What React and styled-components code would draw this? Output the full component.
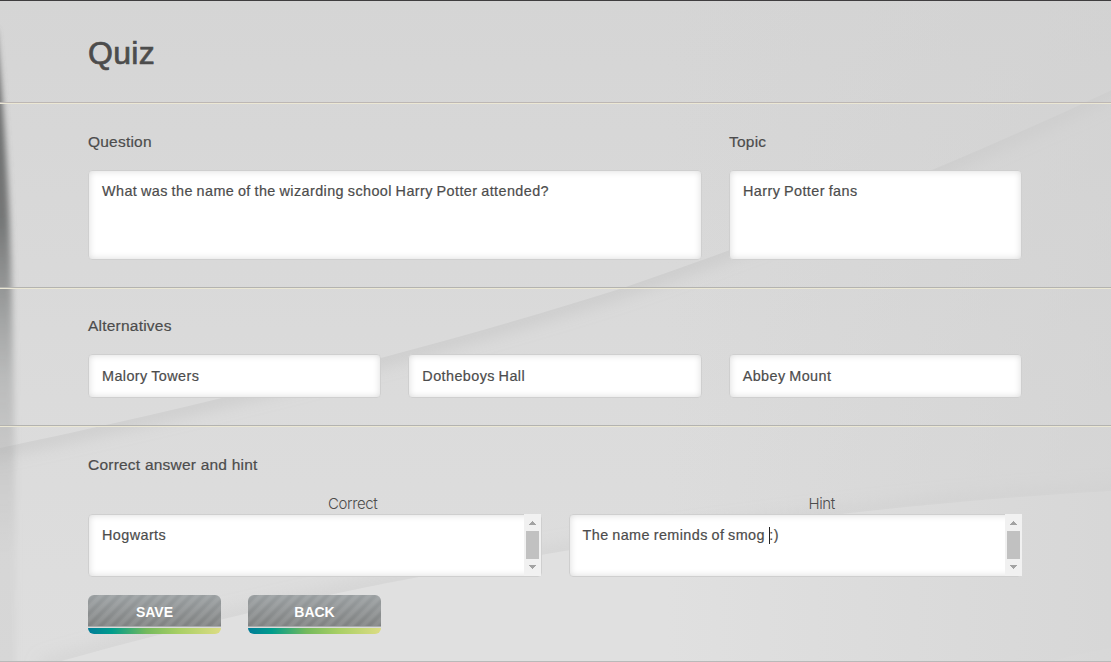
import React from "react";
import styled, { createGlobalStyle } from "styled-components";

const Global = createGlobalStyle`
  * { box-sizing: border-box; }
  body { margin: 0; overflow: hidden; font-family: "Liberation Sans", Arial, sans-serif; color: #4c4c4c; }
`;

const Page = styled.div`
  position: relative;
  height: 662px;
  overflow: hidden;
  border-top: 1px solid #3f3d3f;
  border-bottom: 1px solid #b9b9b9;
  background: #d6d6d6;
`;

const Backdrop = styled.svg`
  position: absolute;
  left: 0;
  top: -1px;
  width: 1111px;
  height: 662px;
`;

const Content = styled.main`
  position: relative;
`;

const Section = styled.section`
  height: ${(p) => p.$height}px;
  padding: ${(p) => p.$top}px 89px 0 88px;
  border-bottom: ${(p) => (p.$last ? "0" : "1px solid #ebe7d4")};
  box-shadow: ${(p) => (p.$last ? "none" : `inset 0 -1px ${p.$rule || "#b3b3b0"}`)};
`;

const Title = styled.h1`
  margin: 0;
  font-size: 32px;
  font-weight: 400;
  line-height: 40px;
  letter-spacing: 0.3px;
  -webkit-text-stroke: 0.7px #4c4c4c;
`;

const Grid = styled.div`
  display: grid;
  grid-template-columns: ${(p) => p.$columns};
  column-gap: 27px;
`;

const Label = styled.h2`
  margin: 0 0 ${(p) => p.$gap || 18}px;
  font-size: 15.5px;
  font-weight: 400;
  line-height: 20px;
  letter-spacing: 0.22px;
  -webkit-text-stroke: 0.2px #4c4c4c;
`;

const Caption = styled.div`
  padding-left: 240px;
  font-family: Inter, "Liberation Sans", sans-serif;
  font-size: 15px;
  font-weight: 300;
  line-height: 20px;
  letter-spacing: -0.4px;
`;

const Field = styled.div`
  display: flex;
  justify-content: space-between;
  height: ${(p) => p.$height}px;
  border: 1px solid #cfcfcf;
  border-radius: 4px;
  background: #fff;
  box-shadow: inset 0 0 7px rgba(0, 0, 0, 0.15);
`;

const FieldText = styled.div`
  padding: ${(p) => p.$top || 10}px 0 0 13px;
  font-size: 14.4px;
  line-height: 20px;
  letter-spacing: 0.42px;
  word-spacing: -0.7px;
  white-space: nowrap;
  -webkit-text-stroke: 0.2px #4c4c4c;
`;

const Caret = styled.span`
  display: inline-block;
  width: 1px;
  height: 17px;
  margin-right: -0.4px;
  vertical-align: -4px;
  background: #222;
`;

const Track = styled.div`
  display: flex;
  flex-direction: column;
  align-items: center;
  justify-content: space-between;
  width: 17px;
  height: 62px;
  margin: -1px -0.5px 0 0;
  padding: 7px 0;
  background: #f1f1f1;
`;

const Thumb = styled.div`
  width: 13px;
  height: 28px;
  background: #c1c1c1;
`;

const Arrow = styled.svg`
  display: block;
  width: 7px;
  height: 4px;
  fill: #a3a3a3;
`;

const Actions = styled.div`
  display: flex;
  gap: 27px;
  margin-top: 18px;
`;

const Button = styled.button`
  width: 133px;
  height: 39px;
  padding: 0 0 6px;
  border: 0;
  border-radius: 6px;
  font: bold 14px/20px "Liberation Sans", Arial, sans-serif;
  letter-spacing: 0;
  color: #fff;
  background:
    linear-gradient(90deg, #007c98 0%, #009c8c 18%, #74b95c 44%, #a8cf64 68%, #dcdc84 100%) 0 33px / 100% 6px no-repeat,
    linear-gradient(#a9abab 0 1px, #dadada 1px 2px) 0 31px / 100% 2px no-repeat,
    repeating-linear-gradient(135deg, rgba(255, 255, 255, 0.1) 0 2px, rgba(255, 255, 255, 0) 4.5px 6px, rgba(255, 255, 255, 0.1) 8.5px),
    linear-gradient(#9a9fa1, #808282 31px);
`;

const UPPER = "M-20 452 C130 422 400 359 623 288 C790 231 960 162 1131 81";
const LOWER = "M40 667 C250 607 420 575 570 550 C750 522 960 498 1131 490";

function Waves() {
  return (
    <Backdrop viewBox="0 0 1111 662">
      <defs>
        <linearGradient id="base" x1="0" y1="0" x2="0" y2="1">
          <stop offset="0" stopColor="#d5d5d5" />
          <stop offset="0.6" stopColor="#dbdbdb" />
          <stop offset="1" stopColor="#dedede" />
        </linearGradient>
        <linearGradient id="side" x1="0" y1="0" x2="1" y2="0">
          <stop offset="0.6" stopColor="#d1d1d1" stopOpacity="0" />
          <stop offset="1" stopColor="#d1d1d1" stopOpacity="0.6" />
        </linearGradient>
        <linearGradient id="edge" x1="0" y1="40" x2="0" y2="560" gradientUnits="userSpaceOnUse">
          <stop offset="0" stopColor="#666" />
          <stop offset="0.35" stopColor="#707272" stopOpacity="0.95" />
          <stop offset="0.5" stopColor="#858787" stopOpacity="0.75" />
          <stop offset="0.65" stopColor="#999b9b" stopOpacity="0.5" />
          <stop offset="0.85" stopColor="#aaa" stopOpacity="0.3" />
          <stop offset="1" stopColor="#bbb" stopOpacity="0.2" />
        </linearGradient>
        <filter id="soft" x="-50%" y="-50%" width="200%" height="200%"><feGaussianBlur stdDeviation="8" /></filter>
        <filter id="fine" filterUnits="userSpaceOnUse" x="-60" y="0" width="160" height="720"><feGaussianBlur stdDeviation="3" /></filter>
        <clipPath id="below"><path d={`${UPPER} V700 H-20 Z`} /></clipPath>
        <clipPath id="above"><path d={`${LOWER} V-20 H-20 V667 Z`} /></clipPath>
      </defs>
      <rect width="1111" height="662" fill="url(#base)" />
      <path d={`${LOWER} V700 H40 Z`} fill="#e0e0e0" />
      <g clipPath="url(#below)">
        <path d={UPPER} fill="none" stroke="#aaa" strokeOpacity="0.28" strokeWidth="17" filter="url(#soft)" />
      </g>
      <g clipPath="url(#above)">
        <path d={LOWER} fill="none" stroke="#b0b0b0" strokeOpacity="0.22" strokeWidth="14" filter="url(#soft)" />
      </g>
      <path d="M1045 663 Q1080 653 1111 648 V663 Z" fill="#e2e2e2" />
      <rect width="1111" height="662" fill="url(#side)" />
      <path d="M-20 30 L-4 30 C3 100 10 190 12 300 C14 400 16 500 16 680 H-20 Z" fill="url(#edge)" filter="url(#fine)" />
    </Backdrop>
  );
}

function Scrollbar() {
  return (
    <Track>
      <Arrow viewBox="0 0 7 4"><path d="M3 0h1v1h1v1h1v1h1v1H0V3h1V2h1V1h1z" /></Arrow>
      <Thumb />
      <Arrow viewBox="0 0 7 4"><path d="M0 0h7v1H6v1H5v1H4v1H3V3H2V2H1V1H0z" /></Arrow>
    </Track>
  );
}

export default function App() {
  return (
    <>
      <Global />
      <Page>
        <Waves />
        <Content>
          <Section $height={103} $top={32} $rule="#bdb7b4">
            <Title>Quiz</Title>
          </Section>
          <Section $height={185} $top={28}>
            <Grid $columns="614px 1fr">
              <div>
                <Label>Question</Label>
                <Field $height={90}>
                  <FieldText>What was the name of the wizarding school Harry Potter attended?</FieldText>
                </Field>
              </div>
              <div>
                <Label>Topic</Label>
                <Field $height={90}><FieldText>Harry Potter fans</FieldText></Field>
              </div>
            </Grid>
          </Section>
          <Section $height={138} $top={27}>
            <Label>Alternatives</Label>
            <Grid $columns="1fr 1fr 1fr">
              {["Malory Towers", "Dotheboys Hall", "Abbey Mount"].map((name) => (
                <Field $height={44} key={name}><FieldText $top={11}>{name}</FieldText></Field>
              ))}
            </Grid>
          </Section>
          <Section $height={234} $top={28} $last>
            <Label $gap={19}>Correct answer and hint</Label>
            <Grid $columns="1fr 1fr">
              <div>
                <Caption>Correct</Caption>
                <Field $height={63}><FieldText>Hogwarts</FieldText><Scrollbar /></Field>
              </div>
              <div>
                <Caption>Hint</Caption>
                <Field $height={63}>
                  <FieldText>The name reminds of smog <Caret />:)</FieldText>
                  <Scrollbar />
                </Field>
              </div>
            </Grid>
            <Actions>
              <Button>SAVE</Button>
              <Button>BACK</Button>
            </Actions>
          </Section>
        </Content>
      </Page>
    </>
  );
}
